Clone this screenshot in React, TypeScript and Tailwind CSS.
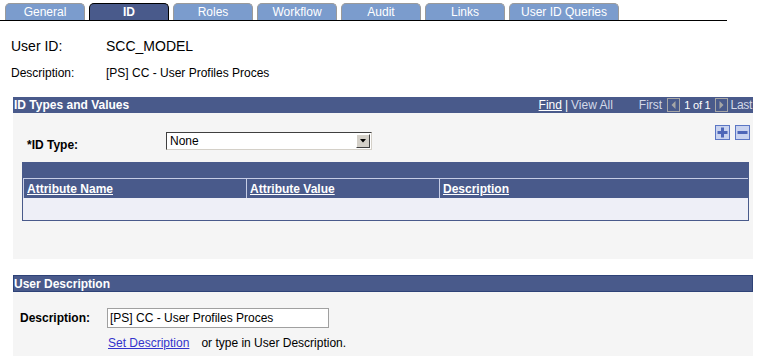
import React from 'react';

const tabs = ['General', 'ID', 'Roles', 'Workflow', 'Audit', 'Links', 'User ID Queries'];

const NavBox: React.FC<{ dir: 'left' | 'right' }> = ({ dir }) => (
  <svg width="13" height="14" viewBox="0 0 13 14" className="block">
    <rect x="0.5" y="0.5" width="12" height="13" fill="none" stroke="#a6a6a6" />
    {dir === 'left' ? (
      <polygon points="8.5,3 8.5,11 4.5,7" fill="#a6a6a6" />
    ) : (
      <polygon points="4.5,3 4.5,11 8.5,7" fill="#a6a6a6" />
    )}
  </svg>
);

const RowButton: React.FC<{ plus?: boolean }> = ({ plus }) => (
  <svg width="15" height="15" viewBox="0 0 15 15" className="block">
    <rect x="0.5" y="0.5" width="14" height="14" fill="#c9d3ef" stroke="#5b76c4" />
    <rect x="2.5" y="6" width="10" height="3" fill="#4d66b8" />
    {plus && <rect x="6" y="2.5" width="3" height="10" fill="#4d66b8" />}
  </svg>
);

const App: React.FC = () => {
  return (
    <div className="w-[760px] h-[356px] bg-white overflow-hidden text-black" style={{ fontFamily: '"Liberation Sans", Arial, sans-serif' }}>
      {/* Tabs */}
      <div className="flex gap-[4px] pl-[5px] pt-[3px] w-[727px] border-b border-black">
        {tabs.map((t) => (
          <div
            key={t}
            className={`h-[17px] ${t === 'User ID Queries' ? 'w-[110px]' : 'w-[80px]'} rounded-t-[5px] border border-b-0 flex items-center justify-center text-[12px] leading-none ${
              t === 'ID' ? 'bg-[#495a8b] border-black text-white font-bold' : 'bg-[#7b9ccd] border-[#9a9a9a] text-white'
            }`}
          >
            {t}
          </div>
        ))}
      </div>

      {/* User info */}
      <div className="pl-[11px] pt-[16px]">
        <div className="flex items-center h-[18px] text-[14px]">
          <span className="w-[95px]">User ID:</span>
          <span>SCC_MODEL</span>
        </div>
        <div className="flex items-center h-[16px] mt-[10px] text-[12px]">
          <span className="w-[95px]">Description:</span>
          <span>[PS] CC - User Profiles Proces</span>
        </div>
      </div>

      {/* ID Types and Values */}
      <div className="ml-[13px] w-[740px] mt-[16px]">
        <div className="h-[16px] bg-[#495a8b] flex items-center text-white text-[12px]">
          <span className="font-bold pl-[1px]">ID Types and Values</span>
          <div className="ml-auto flex items-center pr-[1px]">
            <span className="underline">Find</span>
            <span className="mx-[3px]">|</span>
            <span className="text-[#d3d9e8]">View All</span>
            <span className="ml-[26px] text-[#d3d9e8]">First</span>
            <span className="ml-[5px]"><NavBox dir="left" /></span>
            <span className="mx-[4px] text-[11px] tracking-[-0.2px]">1 of 1</span>
            <NavBox dir="right" />
            <span className="ml-[3px] text-[#d3d9e8] tracking-[-0.3px]">Last</span>
          </div>
        </div>
        <div className="bg-[#f5f5f5] h-[146px] pt-[13px] px-[9px] relative">
          <div className="absolute right-[3px] top-[12px] flex gap-[5px]">
            <RowButton plus />
            <RowButton />
          </div>
          <div className="flex items-start pt-[6px] h-[24px]">
            <span className="w-[144px] pl-[5px] pt-[6px] font-bold text-[12px] leading-[14px]">*ID Type:</span>
            <div className="w-[206px] h-[18px] border border-t-[#404040] border-l-[#404040] border-r-[#d4d0c8] border-b-[#d4d0c8] bg-white flex items-center">
              <span className="flex-1 pl-[3px] text-[12px]">None</span>
              <div className="w-[14px] h-[14px] mr-[1px] bg-[#d4d0c8] border border-t-white border-l-white border-r-[#404040] border-b-[#404040] flex items-center justify-center">
                <svg width="6" height="4" viewBox="0 0 6 4"><polygon points="0,0 6,0 3,3.5" fill="#000" /></svg>
              </div>
            </div>
          </div>
          {/* Grid */}
          <div className="mt-[12px] w-[727px] border border-[#495a8b] bg-[#495a8b]">
            <div className="h-[15px]" />
            <div className="flex h-[20px] text-white text-[12px] font-bold">
              <div className="w-[223px] border-t border-l border-[#c6cde6] pl-[3px] flex items-center"><span className="underline">Attribute Name</span></div>
              <div className="w-[193px] border-t border-l border-[#c6cde6] pl-[3px] flex items-center"><span className="underline">Attribute Value</span></div>
              <div className="flex-1 border-t border-l border-[#c6cde6] pl-[3px] flex items-center"><span className="underline">Description</span></div>
            </div>
            <div className="h-[22px] bg-[#eeeff7]" />
          </div>
        </div>
      </div>

      {/* User Description */}
      <div className="ml-[13px] w-[740px] mt-[16px]">
        <div className="h-[17px] bg-[#495a8b] border border-[#2e4277] flex items-center text-white text-[12px] font-bold">
          <span>User Description</span>
        </div>
        <div className="bg-[#f5f5f5] h-[70px] pt-[16px]">
          <div className="flex items-center">
            <span className="w-[94px] pl-[7px] font-bold text-[12px]">Description:</span>
            <div className="w-[222px] h-[20px] border border-[#a0a0a0] bg-white flex items-center pl-[2px] text-[12px]">[PS] CC - User Profiles Proces</div>
          </div>
          <div className="flex items-center mt-[6px] pl-[95px] text-[12px]">
            <span className="text-[#3333cc] underline">Set Description</span>
            <span className="ml-[12px]">or type in User Description.</span>
          </div>
        </div>
      </div>
    </div>
  );
};

export default App;
